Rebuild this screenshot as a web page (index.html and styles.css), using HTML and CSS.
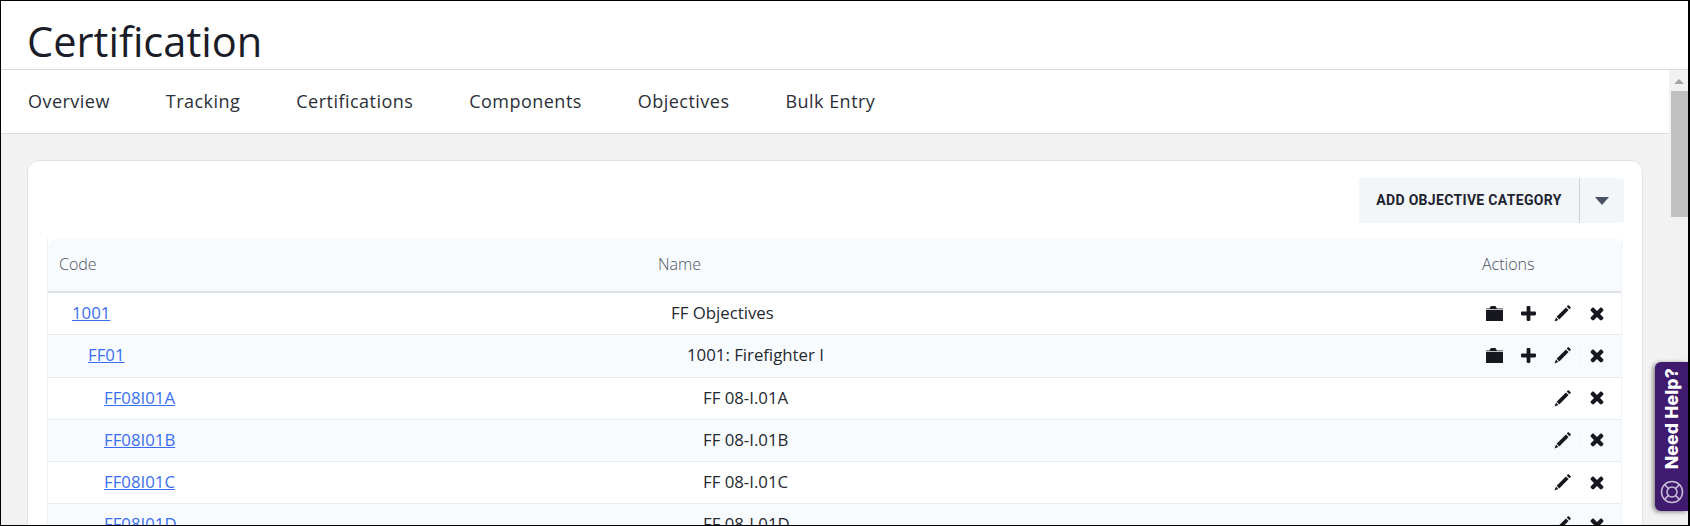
FILE: index.html
```html
<!DOCTYPE html>
<html lang="en">
<head>
    <meta charset="UTF-8">
    <title>Certification</title>
    <link rel="stylesheet" href="styles.css">
</head>
<body>
<svg class="sprite" width="0" height="0">
    <symbol id="i-folder" viewBox="0 0 17 15">
        <path d="M3.500 2.400 4.500.6C4.800.2 5.100 0 5.600 0h3.200c.5 0 .9.2 1.100.6l.9 1.800zM0 2.400h17v.8H0zM0 4h17v11H0z"/>
    </symbol>
    <symbol id="i-plus" viewBox="0 0 15 15">
        <path d="M5.600 1.200C5.600.5 6.100 0 6.800 0h1.400c.7 0 1.200.5 1.200 1.200v4.400h4.400c.7 0 1.200.5 1.200 1.200v1.400c0 .7-.5 1.200-1.200 1.200H9.400v4.400c0 .7-.5 1.200-1.200 1.200H6.800c-.7 0-1.200-.5-1.200-1.200V9.400H1.200C.5 9.400 0 8.900 0 8.200V6.800c0-.7.5-1.200 1.200-1.200h4.400z"/>
    </symbol>
    <symbol id="i-pencil" viewBox="0 0 17 17">
        <path d="M12.700 1.600 14 .3c.2-.2.5-.2.7 0l2 2c.2.2.2.5 0 .7l-1.300 1.300zM11.900 2.400l2.700 2.700-9.300 9.300-2.700-2.700zM2 12.600l2.400 2.400-3.900 1.500z"/>
    </symbol>
    <symbol id="i-times" viewBox="0 0 14 14">
        <path d="M7 4 10 1c.6-.6 1.400-.6 2 0l1 1c.6.6.6 1.400 0 2l-3 3 3 3c.6.6.6 1.400 0 2l-1 1c-.6.6-1.400.6-2 0l-3-3-3 3c-.6.6-1.400.6-2 0l-1-1c-.6-.6-.6-1.400 0-2l3-3-3-3c-.6-.6-.6-1.400 0-2l1-1c.6-.6 1.400-.6 2 0z"/>
    </symbol>
</svg>

<div class="frame">
    <header class="page-title">
        <h1>Certification</h1>
    </header>
    <div class="below-title">
        <div class="content">
            <nav class="tabs">
                <a href="#">Overview</a>
                <a href="#">Tracking</a>
                <a href="#">Certifications</a>
                <a href="#">Components</a>
                <a href="#">Objectives</a>
                <a href="#">Bulk Entry</a>
            </nav>
            <main class="main">
                <section class="card">
                    <div class="toolbar">
                        <div class="split-button">
                            <button class="split-main" type="button">ADD OBJECTIVE CATEGORY</button>
                            <button class="split-caret" type="button" aria-label="More"><span class="caret"></span></button>
                        </div>
                    </div>
                    <div class="grid">
                        <div class="row row-head">
                            <div class="cell">Code</div>
                            <div class="cell">Name</div>
                            <div class="cell">Actions</div>
                        </div>
                        <div class="row level-0">
                            <div class="cell"><a href="#">1001</a></div>
                            <div class="cell name">FF Objectives</div>
                            <div class="actions">
                                <button class="icon-btn" type="button"><svg class="ic-folder"><use href="#i-folder"/></svg></button>
                                <button class="icon-btn" type="button"><svg class="ic-plus"><use href="#i-plus"/></svg></button>
                                <button class="icon-btn" type="button"><svg class="ic-pencil"><use href="#i-pencil"/></svg></button>
                                <button class="icon-btn" type="button"><svg class="ic-times"><use href="#i-times"/></svg></button>
                            </div>
                        </div>
                        <div class="row level-1 tint">
                            <div class="cell"><a href="#">FF01</a></div>
                            <div class="cell name">1001: Firefighter I</div>
                            <div class="actions">
                                <button class="icon-btn" type="button"><svg class="ic-folder"><use href="#i-folder"/></svg></button>
                                <button class="icon-btn" type="button"><svg class="ic-plus"><use href="#i-plus"/></svg></button>
                                <button class="icon-btn" type="button"><svg class="ic-pencil"><use href="#i-pencil"/></svg></button>
                                <button class="icon-btn" type="button"><svg class="ic-times"><use href="#i-times"/></svg></button>
                            </div>
                        </div>
                        <div class="row level-2">
                            <div class="cell"><a href="#">FF08I01A</a></div>
                            <div class="cell name">FF 08-I.01A</div>
                            <div class="actions">
                                <button class="icon-btn" type="button"><svg class="ic-pencil"><use href="#i-pencil"/></svg></button>
                                <button class="icon-btn" type="button"><svg class="ic-times"><use href="#i-times"/></svg></button>
                            </div>
                        </div>
                        <div class="row level-2 tint">
                            <div class="cell"><a href="#">FF08I01B</a></div>
                            <div class="cell name">FF 08-I.01B</div>
                            <div class="actions">
                                <button class="icon-btn" type="button"><svg class="ic-pencil"><use href="#i-pencil"/></svg></button>
                                <button class="icon-btn" type="button"><svg class="ic-times"><use href="#i-times"/></svg></button>
                            </div>
                        </div>
                        <div class="row level-2">
                            <div class="cell"><a href="#">FF08I01C</a></div>
                            <div class="cell name">FF 08-I.01C</div>
                            <div class="actions">
                                <button class="icon-btn" type="button"><svg class="ic-pencil"><use href="#i-pencil"/></svg></button>
                                <button class="icon-btn" type="button"><svg class="ic-times"><use href="#i-times"/></svg></button>
                            </div>
                        </div>
                        <div class="row level-2 tint">
                            <div class="cell"><a href="#">FF08I01D</a></div>
                            <div class="cell name">FF 08-I.01D</div>
                            <div class="actions">
                                <button class="icon-btn" type="button"><svg class="ic-pencil"><use href="#i-pencil"/></svg></button>
                                <button class="icon-btn" type="button"><svg class="ic-times"><use href="#i-times"/></svg></button>
                            </div>
                        </div>
                    </div>
                </section>
            </main>
        </div>
        <div class="scrollbar">
            <span class="scroll-arrow"></span>
            <span class="scroll-thumb"></span>
        </div>
    </div>
    <a class="need-help" href="#">
        <span class="need-help-text">Need Help?</span>
        <svg class="need-help-icon" viewBox="0 0 24 24">
            <circle cx="12" cy="12" r="10.500"/>
            <circle cx="12" cy="12" r="5"/>
            <path d="M4.600 4.600 8.500 8.500M19.400 4.600 15.500 8.500M4.600 19.400 8.500 15.500M19.400 19.400 15.500 15.500"/>
        </svg>
    </a>
</div>
</body>
</html>
```

FILE: styles.css
```css
* {
    box-sizing: border-box;
}

body {
    margin: 0;
    font-family: "Open Sans", Arial, sans-serif;
    color: #212529;
}

.sprite {
    position: absolute;
}

.frame {
    position: relative;
    display: flex;
    flex-direction: column;
    width: 1690px;
    height: 526px;
    overflow: hidden;
    background: #fff;
    border-top: 1px solid #000;
    border-left: 1px solid #000;
    border-right: 2px solid #000;
    border-bottom: 1px solid #000;
}

.page-title {
    height: 69px;
    padding: 15px 26px 0;
    border-bottom: 1px solid #d8d8d8;
}

.page-title h1 {
    margin: 0;
    font-size: 41.600px;
    font-weight: 400;
    line-height: 50px;
    color: #1a1d28;
}

.below-title {
    flex: 1;
    display: flex;
    min-height: 0;
}

.content {
    flex: 1;
    min-width: 0;
    display: flex;
    flex-direction: column;
    background: #f2f2f2;
}

.tabs {
    display: flex;
    flex: none;
    gap: 56px;
    height: 64px;
    padding: 0 27px 2px;
    align-items: center;
    background: #fff;
    border-bottom: 1px solid #dcdcdc;
}

.tabs a {
    font-size: 18px;
    letter-spacing: .47px;
    color: #2b2f38;
    text-decoration: none;
}

.main {
    padding: 26px 26px 0;
}

.card {
    padding: 17px 20px 0 19px;
    background: #fff;
    border: 1px solid #e3e3e3;
    border-radius: 12px;
}

.toolbar {
    display: flex;
    justify-content: flex-end;
    margin-right: -2px;
    margin-bottom: 15px;
}

.split-button {
    display: flex;
    height: 45px;
    background: #f3f6f9;
    border-radius: 4px;
}

.split-button button {
    border: 0;
    background: none;
}

.split-main {
    width: 220px;
    padding: 0 0 1px;
    font-family: Roboto, Arial, sans-serif;
    font-size: 14px;
    font-weight: 700;
    letter-spacing: .32px;
    color: #1e2430;
}

.split-caret {
    display: flex;
    align-items: center;
    justify-content: center;
    width: 45px;
    border-left: 1px solid #cfd3d8 !important;
}

.caret {
    width: 0;
    height: 0;
    border-left: 7px solid transparent;
    border-right: 7px solid transparent;
    border-top: 8px solid #4a5162;
}

.grid {
    border-left: 1px solid #eef1f5;
    border-right: 1px solid #eef1f5;
    font-size: 16.800px;
}

.row {
    display: grid;
    grid-template-columns: 599px 824px 1fr;
    align-items: center;
    height: 42.250px;
    padding-bottom: 2px;
    border-bottom: 1px solid #e9ecf1;
}

.row-head {
    height: 55px;
    padding-bottom: 2px;
    background: #f8fbfe;
    border-radius: 10px 10px 0 0;
    border-bottom: 2px solid #dfe1e5;
    font-size: 16px;
    font-weight: 300;
    color: #4d5261;
}

.tint {
    background: #f8fbfe;
}

.cell {
    padding-left: 11px;
}

.level-0 .cell {
    padding-left: 24px;
}

.level-1 .cell {
    padding-left: 40px;
}

.level-2 .cell {
    padding-left: 56px;
}

.cell a {
    color: #3a6ff0;
}

.name {
    color: #25282f;
}

.actions {
    display: flex;
    justify-content: flex-end;
    gap: 5px;
    margin-top: 2px;
    padding-right: 10px;
}

.icon-btn {
    display: flex;
    align-items: center;
    justify-content: center;
    width: 29px;
    height: 26px;
    padding: 0;
    background: none;
    border: 1px solid rgba(255, 255, 255, .6);
    border-radius: 6px;
}

.icon-btn svg {
    fill: #17181f;
}

.ic-folder {
    width: 17px;
    height: 15px;
}

.ic-plus {
    width: 15px;
    height: 15px;
}

.ic-pencil {
    width: 17px;
    height: 17px;
}

.ic-times {
    width: 14px;
    height: 14px;
}

.scrollbar {
    flex: none;
    width: 19px;
    padding-left: 2px;
    background: #f1f1f1;
}

.scroll-arrow {
    display: block;
    width: 0;
    height: 0;
    margin: 9px 0 7px 3px;
    border-left: 5px solid transparent;
    border-right: 5px solid transparent;
    border-bottom: 5px solid #a3a3a3;
}

.scroll-thumb {
    display: block;
    height: 126px;
    background: #c1c1c1;
}

.need-help {
    position: absolute;
    top: 361px;
    right: 0;
    display: flex;
    flex-direction: column;
    align-items: center;
    justify-content: space-between;
    width: 33px;
    height: 149px;
    padding: 6px 0 7px;
    background: #3f1a6e;
    border-radius: 6px 0 0 6px;
    box-shadow: -2px 1px 4px rgba(0, 0, 0, .45);
    color: #fff;
    text-decoration: none;
}

.need-help-text {
    writing-mode: vertical-rl;
    transform: rotate(180deg);
    font-family: Inter, Arial, sans-serif;
    font-size: 17.500px;
    font-weight: 800;
    letter-spacing: .2px;
    line-height: 20px;
}

.need-help-icon {
    width: 24px;
    height: 24px;
    fill: none;
    stroke: #c9bfd8;
    stroke-width: 1.500;
}
```
